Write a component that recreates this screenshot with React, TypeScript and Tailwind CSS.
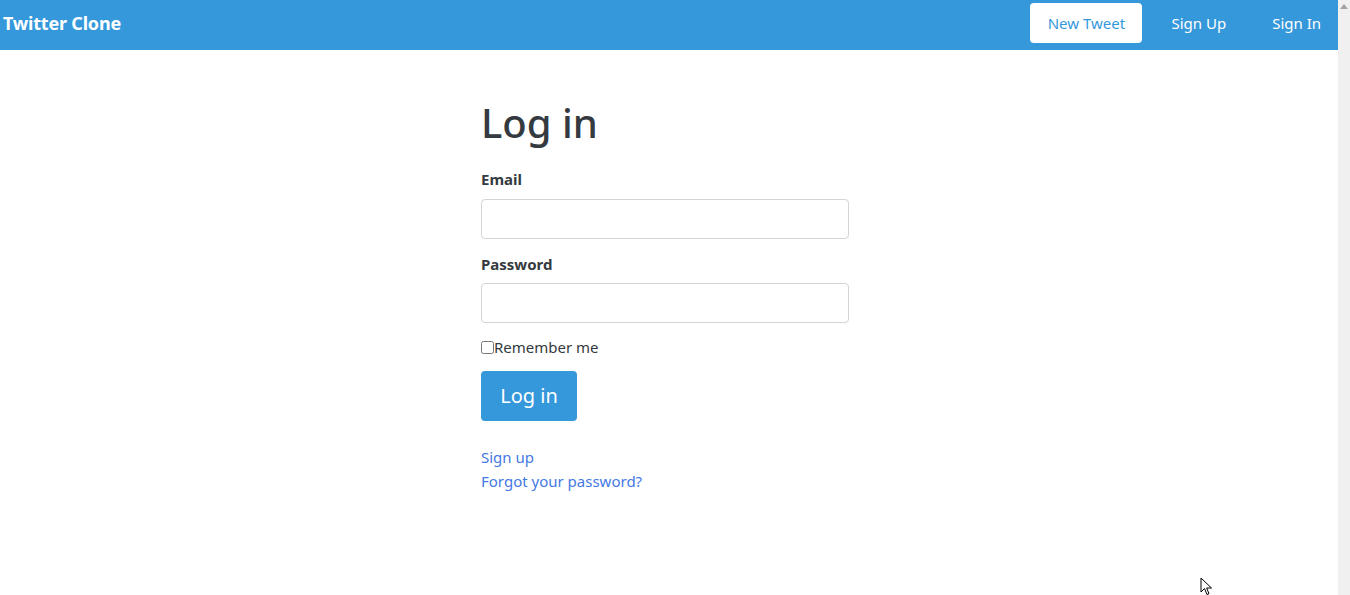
import React from 'react'

const font = { fontFamily: '"Noto Sans", "Open Sans", sans-serif' }

function Navbar() {
  return (
    <nav className="h-[50px] bg-[#3498db] flex items-start justify-between pl-[3px] pr-[17px] pt-[3px]">
      <a className="h-[40px] flex items-center text-white font-bold text-[18px] tracking-[-0.2px]">Twitter Clone</a>
      <div className="flex items-center h-[40px]">
        <a className="h-[40px] w-[112px] bg-white rounded-[4px] flex items-center justify-center text-[#3498db] text-[15px]">
          New Tweet
        </a>
        <a className="ml-[29px] text-white text-[15px]">Sign Up</a>
        <a className="ml-[46px] text-white text-[15px]">Sign In</a>
      </div>
    </nav>
  )
}

function LoginForm() {
  return (
    <div className="pr-[8px]">
      <div className="mx-auto w-[368px] pt-[45px] text-[#343a40]">
        <h2 className="text-[40px] leading-[55px] font-medium mb-[17px]">Log in</h2>

        <div>
          <label className="block font-bold text-[15px] leading-[24px] mb-[8px]">Email</label>
          <input type="email" className="block w-full h-[40px] border border-[#d4d4d4] rounded-[4px] px-3 outline-none" />
        </div>

        <div className="mt-[13px]">
          <label className="block font-bold text-[15px] leading-[24px] mb-[7px]">Password</label>
          <input type="password" className="block w-full h-[40px] border border-[#d4d4d4] rounded-[4px] px-3 outline-none" />
        </div>

        <div className="mt-[12px] flex items-center h-[24px] text-[15px]">
          <input type="checkbox" className="w-[13px] h-[13px] m-0" />
          <label>Remember me</label>
        </div>

        <button className="mt-[12px] h-[50px] w-[96px] bg-[#3498db] text-white text-[20px] rounded-[4px]">
          Log in
        </button>

        <div className="mt-[24px] flex flex-col text-[15px] leading-[24px] text-[#4479e3]">
          <a>Sign up</a>
          <a>Forgot your password?</a>
        </div>
      </div>
    </div>
  )
}

function Scrollbar() {
  return (
    <div className="w-[12px] bg-[#f0f0f0] flex flex-col items-center pt-[4px]">
      <svg width="8" height="5" viewBox="0 0 8 5">
        <path d="M0 5 L4 0 L8 5 Z" fill="#a3a3a3" />
      </svg>
    </div>
  )
}

export default function App() {
  return (
    <div className="h-[595px] w-[1350px] flex bg-white overflow-hidden relative" style={font}>
      <div className="flex-1">
        <Navbar />
        <LoginForm />
      </div>
      <Scrollbar />
      <svg className="absolute left-[1200px] top-[577px]" width="13" height="19" viewBox="0 0 13 19">
        <path d="M1 1 L1 15 L4.5 11.5 L7 17.5 L9 16.7 L6.6 11 L11.5 11 Z" fill="white" stroke="black" strokeWidth="1" strokeLinejoin="round" />
      </svg>
    </div>
  )
}
